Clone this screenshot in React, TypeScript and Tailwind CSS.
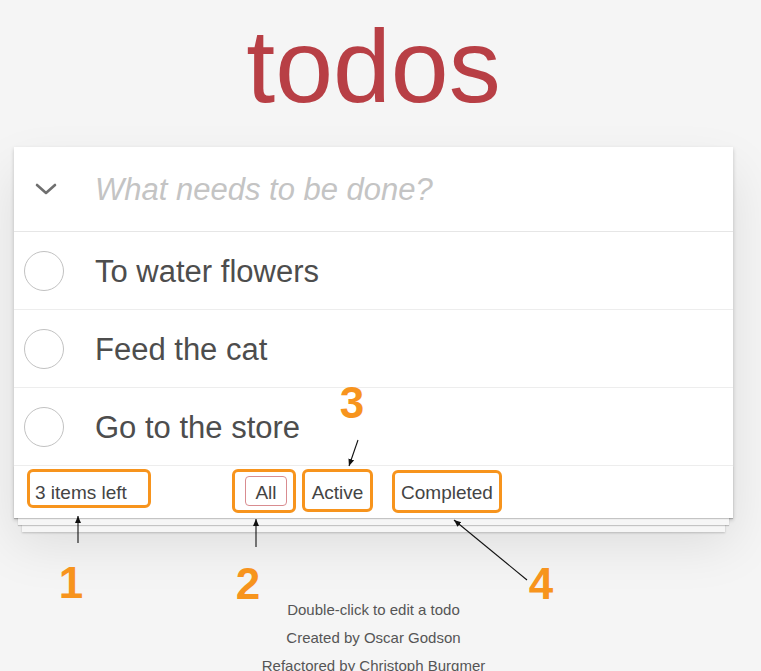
import React from "react"

const todos = ["To water flowers", "Feed the cat", "Go to the store"]

function Chevron() {
  return (
    <svg width="22" height="12" viewBox="0 0 22 12" fill="none">
      <polyline points="2,2 11,10 20,2" stroke="#6f6f6f" strokeWidth="2.6" strokeLinecap="round" strokeLinejoin="round" />
    </svg>
  )
}

function Arrows() {
  return (
    <svg className="pointer-events-none absolute left-0 top-0" width="761" height="671">
      <defs>
        <marker id="head" markerWidth="8" markerHeight="8" refX="7" refY="4" orient="auto" markerUnits="userSpaceOnUse">
          <path d="M0,1 L7,4 L0,7 Z" fill="#111" />
        </marker>
      </defs>
      <g stroke="#111" strokeWidth="1.1">
        <line x1="78" y1="543" x2="78" y2="516" markerEnd="url(#head)" />
        <line x1="256" y1="547" x2="256" y2="519" markerEnd="url(#head)" />
        <line x1="358" y1="440" x2="349" y2="466" markerEnd="url(#head)" />
        <line x1="527" y1="580" x2="454" y2="520" markerEnd="url(#head)" />
      </g>
    </svg>
  )
}

function Marker({ n, left, top }: { n: string; left: number; top: number }) {
  return (
    <div
      className="absolute w-[40px] text-center text-[44px] font-bold leading-none text-[#f7941d]"
      style={{ left, top }}
    >
      {n}
    </div>
  )
}

export default function App() {
  return (
    <div className="relative min-h-screen w-full overflow-hidden bg-[#f5f5f5] font-['Liberation_Sans',Arial,sans-serif]">
      <div className="ml-[14px] w-[719px]">
        <h1 className="pt-[14px] text-center text-[104px] leading-none text-[#b83f45]">todos</h1>

        <section className="relative mt-[29px] bg-white shadow-[0_2px_4px_0_rgba(0,0,0,0.2),0_25px_50px_0_rgba(0,0,0,0.1)]">
          <header className="flex h-[85px] items-center border-b border-[#e6e6e6]">
            <div className="w-[81px] pl-[21px]">
              <Chevron />
            </div>
            <span className="text-[31px] italic leading-none text-[#c4c4c4]">What needs to be done?</span>
          </header>

          <ul>
            {todos.map((t) => (
              <li key={t} className="flex h-[78px] items-center border-b border-[#ededed]">
                <div className="w-[81px] pl-[10px]">
                  <div className="h-[40px] w-[40px] rounded-full border-[1.5px] border-[#c2c2c2]" />
                </div>
                <span className="pt-[2px] text-[31px] leading-none text-[#4d4d4d]">{t}</span>
              </li>
            ))}
          </ul>

          <footer className="flex h-[52px] items-start pl-[13px] pt-[3px] text-[19px] leading-none text-[#444] shadow-[0_1px_1px_rgba(0,0,0,0.2),0_11px_0_-4px_#f6f6f6,0_12px_1px_-4px_rgba(0,0,0,0.2),0_22px_0_-8px_#f6f6f6,0_23px_2px_-8px_rgba(0,0,0,0.2)]">
            <div className="h-[39px] w-[124px] rounded-[6px] border-[3px] border-[#f7941d] pl-[5px] pt-[11px]">
              3 items left
            </div>
            <div className="ml-[81px] h-[44px] w-[64px] rounded-[6px] border-[3px] border-[#f7941d] pl-[10px] pt-[4px]">
              <div className="h-[30px] w-[42px] rounded-[4px] border border-[#d98c90] pt-[6px] text-center">All</div>
            </div>
            <div className="ml-[6px] h-[43px] w-[71px] rounded-[6px] border-[3px] border-[#f7941d] pt-[11px] text-center">
              Active
            </div>
            <div className="ml-[19px] mt-[1px] h-[43px] w-[110px] rounded-[6px] border-[3px] border-[#f7941d] pt-[10px] text-center">
              Completed
            </div>
          </footer>
        </section>

        <div className="mt-[78px] text-center text-[15px] leading-[28px] text-[#555]">
          <p>Double-click to edit a todo</p>
          <p>Created by Oscar Godson</p>
          <p>Refactored by Christoph Burgmer</p>
        </div>
      </div>

      <Arrows />
      <Marker n="1" left={51} top={561} />
      <Marker n="2" left={228} top={562} />
      <Marker n="3" left={332} top={381} />
      <Marker n="4" left={521} top={562} />
    </div>
  )
}
